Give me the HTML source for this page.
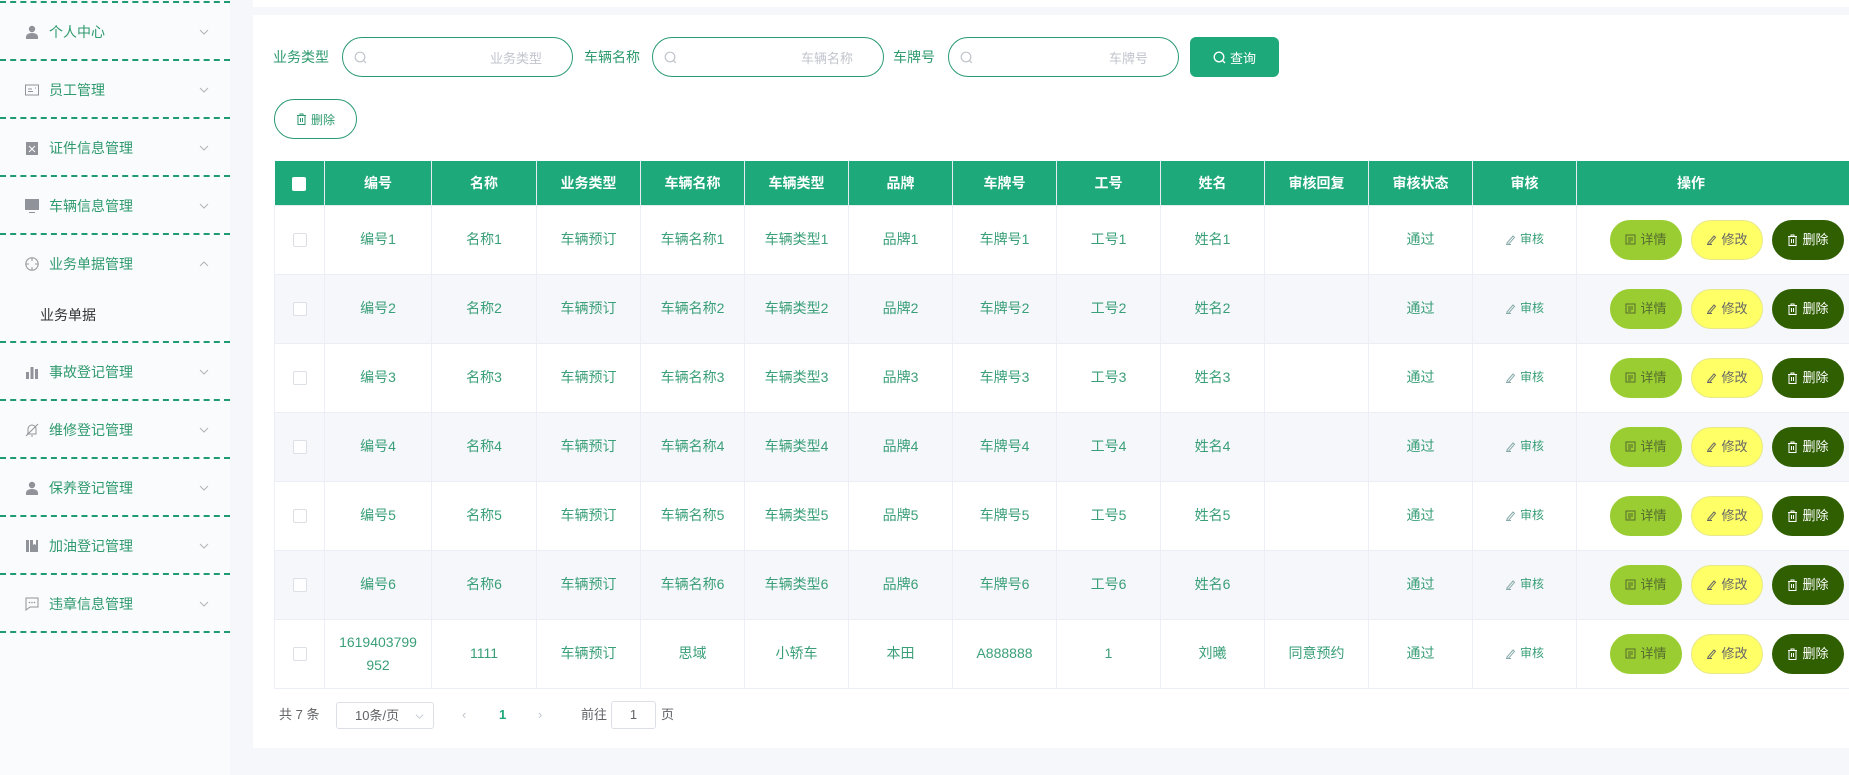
<!DOCTYPE html>
<html><head><meta charset="utf-8">
<style>
*{box-sizing:border-box;margin:0;padding:0}
body{width:1849px;height:775px;overflow:hidden;background:#f5f7fa;font-family:"Liberation Sans","Noto Sans CJK SC",sans-serif;font-size:14px;position:relative}
.side{position:absolute;left:0;top:0;width:230px;height:775px;background:#fafbfc}
.dash{position:absolute;left:0;width:230px;border-top:2px dashed #1f9a74}
.mi{position:absolute;left:0;width:230px;height:56px;display:flex;align-items:center;color:#2e9a6e;font-size:14px}
.mi svg.ic{position:absolute;left:25px;width:14px;height:14px}
.mi span{position:absolute;left:49px}
.mi .chev{position:absolute;left:199px;width:10px;height:10px}
.topcard{position:absolute;left:253px;top:0;width:1596px;height:7px;background:#fff}
.card{position:absolute;left:253px;top:15px;width:1596px;height:733px;background:#fff;overflow:hidden}
.lbl{position:absolute;top:47px;color:#2e9a6e;font-size:14px;line-height:20px}
.inp{position:absolute;top:37px;height:40px;border:1px solid #2a9a72;border-radius:20px;background:#fff}
.inp svg{position:absolute;left:11px;top:13px}
.inp .ph{position:absolute;right:30px;top:10px;color:#c0c4cc;font-size:13px}
.qbtn{position:absolute;left:1190px;top:37px;width:89px;height:40px;background:#1ea97a;border-radius:6px;color:#fff;font-size:13px;display:flex;align-items:center;justify-content:center;gap:4px}
.dbtn{position:absolute;left:274px;top:99px;width:83px;height:40px;border:1px solid #2a9a72;border-radius:20px;color:#2e9a6e;font-size:12px;display:flex;align-items:center;justify-content:center;gap:4px}
table{position:absolute;left:274px;top:161px;border-collapse:collapse;table-layout:fixed;width:1620px}
th{background:#1ea97a;color:#fff;font-weight:bold;height:44px;border:1px solid #e6ebf0;border-top:none;font-size:14px}
th:first-child{border-left:none}
td{height:69px;border:1px solid #ebeef5;text-align:center;color:#3a9f78;font-size:14px;line-height:23px;background:#fff}
tr.s td{background:#f5f7fa}
.cb{display:inline-block;width:14px;height:14px;border:1px solid #dcdfe6;background:#fff;border-radius:2px;vertical-align:middle}
.hcb{display:inline-block;width:14px;height:14px;background:#fff;border-radius:2px;vertical-align:middle}
.aud{font-size:12px;color:#3a9f78;display:inline-flex;align-items:center;gap:4px}
.ops{display:flex;gap:9px;padding-left:33px}
.b{width:72px;height:40px;border-radius:20px;font-size:13px;display:flex;align-items:center;justify-content:center;gap:4px}
.b1{background:#9acd32;color:#556b2f;border:1px solid #9acd32}
.b2{background:#ffff66;color:#666;border:1px solid #e8e88a}
.b3{background:#2f5f00;color:#fff}
.pg{position:absolute;top:705px;font-size:13px;color:#606266;line-height:20px}
</style></head><body>
<div class="side">
  <div class="dash" style="top:1px"></div>
  <div class="mi" style="top:4px"><svg class="ic" viewBox="0 0 14 14"><circle cx="7" cy="4" r="3.2" fill="#909399"/><path d="M1 14v-2c0-2.5 2.5-4 6-4s6 1.5 6 4v2z" fill="#909399"/></svg><span>个人中心</span><svg class="chev" viewBox="0 0 10 10"><path d="M1 3l4 4 4-4" stroke="#b0b3b8" fill="none"/></svg></div>
  <div class="dash" style="top:59px"></div>
  <div class="mi" style="top:62px"><svg class="ic" viewBox="0 0 14 14"><rect x="0.5" y="2" width="13" height="10" fill="none" stroke="#909399"/><path d="M3 6h4M3 8.5h5M10 5h1" stroke="#909399"/></svg><span>员工管理</span><svg class="chev" viewBox="0 0 10 10"><path d="M1 3l4 4 4-4" stroke="#b0b3b8" fill="none"/></svg></div>
  <div class="dash" style="top:117px"></div>
  <div class="mi" style="top:120px"><svg class="ic" viewBox="0 0 14 14"><rect x="1" y="1" width="12" height="13" fill="#909399"/><path d="M4 5l6 6M10 5l-6 6" stroke="#fff"/></svg><span>证件信息管理</span><svg class="chev" viewBox="0 0 10 10"><path d="M1 3l4 4 4-4" stroke="#b0b3b8" fill="none"/></svg></div>
  <div class="dash" style="top:175px"></div>
  <div class="mi" style="top:178px"><svg class="ic" viewBox="0 0 14 14"><rect x="0" y="0" width="14" height="11" fill="#909399"/><path d="M4 13.5h6" stroke="#909399"/></svg><span>车辆信息管理</span><svg class="chev" viewBox="0 0 10 10"><path d="M1 3l4 4 4-4" stroke="#b0b3b8" fill="none"/></svg></div>
  <div class="dash" style="top:233px"></div>
  <div class="mi" style="top:236px"><svg class="ic" viewBox="0 0 14 14"><circle cx="7" cy="7" r="6.2" fill="none" stroke="#909399"/><path d="M7 1v3M7 10v3M1 7h3M10 7h3" stroke="#909399"/></svg><span>业务单据管理</span><svg class="chev" viewBox="0 0 10 10"><path d="M1 7l4-4 4 4" stroke="#b0b3b8" fill="none"/></svg></div>
  <div style="position:absolute;left:40px;top:305px;color:#303133;font-size:14px">业务单据</div>
  <div class="dash" style="top:341px"></div>
  <div class="mi" style="top:344px"><svg class="ic" viewBox="0 0 14 14"><rect x="1" y="7" width="3" height="7" fill="#909399"/><rect x="5.5" y="2" width="3" height="12" fill="#909399"/><rect x="10" y="4" width="3" height="10" fill="#909399"/></svg><span>事故登记管理</span><svg class="chev" viewBox="0 0 10 10"><path d="M1 3l4 4 4-4" stroke="#b0b3b8" fill="none"/></svg></div>
  <div class="dash" style="top:399px"></div>
  <div class="mi" style="top:402px"><svg class="ic" viewBox="0 0 14 14"><path d="M3 11V6a4 4 0 0 1 8 0v5H2M1 13L13 1M6 13h2" stroke="#909399" fill="none"/></svg><span>维修登记管理</span><svg class="chev" viewBox="0 0 10 10"><path d="M1 3l4 4 4-4" stroke="#b0b3b8" fill="none"/></svg></div>
  <div class="dash" style="top:457px"></div>
  <div class="mi" style="top:460px"><svg class="ic" viewBox="0 0 14 14"><circle cx="7" cy="4" r="3.2" fill="#909399"/><path d="M1 14v-2c0-2.5 2.5-4 6-4s6 1.5 6 4v2z" fill="#909399"/></svg><span>保养登记管理</span><svg class="chev" viewBox="0 0 10 10"><path d="M1 3l4 4 4-4" stroke="#b0b3b8" fill="none"/></svg></div>
  <div class="dash" style="top:515px"></div>
  <div class="mi" style="top:518px"><svg class="ic" viewBox="0 0 14 14"><rect x="1" y="1" width="3" height="12" fill="#909399"/><rect x="5" y="1" width="8" height="12" fill="#909399"/><path d="M8 1v5l1.5-1 1.5 1V1" fill="#fff"/></svg><span>加油登记管理</span><svg class="chev" viewBox="0 0 10 10"><path d="M1 3l4 4 4-4" stroke="#b0b3b8" fill="none"/></svg></div>
  <div class="dash" style="top:573px"></div>
  <div class="mi" style="top:576px"><svg class="ic" viewBox="0 0 14 14"><path d="M1 1h12v9H5l-4 3z" fill="none" stroke="#909399"/><circle cx="4.5" cy="5.5" r=".8" fill="#909399"/><circle cx="7" cy="5.5" r=".8" fill="#909399"/><circle cx="9.5" cy="5.5" r=".8" fill="#909399"/></svg><span>违章信息管理</span><svg class="chev" viewBox="0 0 10 10"><path d="M1 3l4 4 4-4" stroke="#b0b3b8" fill="none"/></svg></div>
  <div class="dash" style="top:631px"></div>
</div>
<div class="topcard"></div>
<div class="card"></div>

<div class="lbl" style="left:273px">业务类型</div>
<div class="inp" style="left:342px;width:231px"><svg width="13" height="13" viewBox="0 0 13 13"><circle cx="6" cy="6" r="4.8" fill="none" stroke="#c0c4cc" stroke-width="1.2"/><path d="M9.5 9.5l2.5 2.5" stroke="#c0c4cc" stroke-width="1.2"/></svg><span class="ph">业务类型</span></div>
<div class="lbl" style="left:584px">车辆名称</div>
<div class="inp" style="left:652px;width:232px"><svg width="13" height="13" viewBox="0 0 13 13"><circle cx="6" cy="6" r="4.8" fill="none" stroke="#c0c4cc" stroke-width="1.2"/><path d="M9.5 9.5l2.5 2.5" stroke="#c0c4cc" stroke-width="1.2"/></svg><span class="ph">车辆名称</span></div>
<div class="lbl" style="left:893px">车牌号</div>
<div class="inp" style="left:948px;width:231px"><svg width="13" height="13" viewBox="0 0 13 13"><circle cx="6" cy="6" r="4.8" fill="none" stroke="#c0c4cc" stroke-width="1.2"/><path d="M9.5 9.5l2.5 2.5" stroke="#c0c4cc" stroke-width="1.2"/></svg><span class="ph">车牌号</span></div>
<div class="qbtn"><svg width="13" height="13" viewBox="0 0 13 13"><circle cx="6" cy="6" r="4.8" fill="none" stroke="#fff" stroke-width="1.3"/><path d="M9.5 9.5l2.5 2.5" stroke="#fff" stroke-width="1.3"/></svg>查询</div>
<div class="dbtn"><svg width="11" height="12" viewBox="0 0 11 12"><path d="M1 2.5h9M4 2.5V1h3v1.5M2 2.5v9h7v-9M4.5 5v4M6.5 5v4" stroke="#2e9a6e" fill="none"/></svg>删除</div>

<table>
<colgroup><col style="width:50px"><col style="width:107px"><col style="width:105px"><col style="width:104px"><col style="width:104px"><col style="width:104px"><col style="width:104px"><col style="width:104px"><col style="width:104px"><col style="width:104px"><col style="width:104px"><col style="width:104px"><col style="width:104px"><col style="width:320px"></colgroup>
<tr><th><span class="hcb"></span></th><th>编号</th><th>名称</th><th>业务类型</th><th>车辆名称</th><th>车辆类型</th><th>品牌</th><th>车牌号</th><th>工号</th><th>姓名</th><th>审核回复</th><th>审核状态</th><th>审核</th><th style="text-align:left;padding-left:100px">操作</th></tr>
<tr><td><span class="cb"></span></td><td>编号1</td><td>名称1</td><td>车辆预订</td><td>车辆名称1</td><td>车辆类型1</td><td>品牌1</td><td>车牌号1</td><td>工号1</td><td>姓名1</td><td></td><td>通过</td><td><span class="aud"><svg width="11" height="11" viewBox="0 0 11 11"><path d="M2 9L8 2l1.5 1.3-6 7H2zM1 10.5h5" stroke="#8aa" fill="none"/></svg>审核</span></td><td><div class="ops"><div class="b b1"><svg width="11" height="11" viewBox="0 0 11 11"><rect x="1" y="1" width="9" height="9" fill="none" stroke="#556b2f"/><path d="M3 4h5M3 6h5M3 8h3" stroke="#556b2f"/></svg>详情</div><div class="b b2"><svg width="11" height="11" viewBox="0 0 11 11"><path d="M2 9L8 2l1.5 1.3-6 7H2zM1 10.5h5" stroke="#666" fill="none"/></svg>修改</div><div class="b b3"><svg width="11" height="12" viewBox="0 0 11 12"><path d="M1 2.5h9M4 2.5V1h3v1.5M2 2.5v9h7v-9M4.5 5v4M6.5 5v4" stroke="#fff" fill="none"/></svg>删除</div></div></td></tr>
<tr class="s"><td><span class="cb"></span></td><td>编号2</td><td>名称2</td><td>车辆预订</td><td>车辆名称2</td><td>车辆类型2</td><td>品牌2</td><td>车牌号2</td><td>工号2</td><td>姓名2</td><td></td><td>通过</td><td><span class="aud"><svg width="11" height="11" viewBox="0 0 11 11"><path d="M2 9L8 2l1.5 1.3-6 7H2zM1 10.5h5" stroke="#8aa" fill="none"/></svg>审核</span></td><td><div class="ops"><div class="b b1"><svg width="11" height="11" viewBox="0 0 11 11"><rect x="1" y="1" width="9" height="9" fill="none" stroke="#556b2f"/><path d="M3 4h5M3 6h5M3 8h3" stroke="#556b2f"/></svg>详情</div><div class="b b2"><svg width="11" height="11" viewBox="0 0 11 11"><path d="M2 9L8 2l1.5 1.3-6 7H2zM1 10.5h5" stroke="#666" fill="none"/></svg>修改</div><div class="b b3"><svg width="11" height="12" viewBox="0 0 11 12"><path d="M1 2.5h9M4 2.5V1h3v1.5M2 2.5v9h7v-9M4.5 5v4M6.5 5v4" stroke="#fff" fill="none"/></svg>删除</div></div></td></tr>
<tr><td><span class="cb"></span></td><td>编号3</td><td>名称3</td><td>车辆预订</td><td>车辆名称3</td><td>车辆类型3</td><td>品牌3</td><td>车牌号3</td><td>工号3</td><td>姓名3</td><td></td><td>通过</td><td><span class="aud"><svg width="11" height="11" viewBox="0 0 11 11"><path d="M2 9L8 2l1.5 1.3-6 7H2zM1 10.5h5" stroke="#8aa" fill="none"/></svg>审核</span></td><td><div class="ops"><div class="b b1"><svg width="11" height="11" viewBox="0 0 11 11"><rect x="1" y="1" width="9" height="9" fill="none" stroke="#556b2f"/><path d="M3 4h5M3 6h5M3 8h3" stroke="#556b2f"/></svg>详情</div><div class="b b2"><svg width="11" height="11" viewBox="0 0 11 11"><path d="M2 9L8 2l1.5 1.3-6 7H2zM1 10.5h5" stroke="#666" fill="none"/></svg>修改</div><div class="b b3"><svg width="11" height="12" viewBox="0 0 11 12"><path d="M1 2.5h9M4 2.5V1h3v1.5M2 2.5v9h7v-9M4.5 5v4M6.5 5v4" stroke="#fff" fill="none"/></svg>删除</div></div></td></tr>
<tr class="s"><td><span class="cb"></span></td><td>编号4</td><td>名称4</td><td>车辆预订</td><td>车辆名称4</td><td>车辆类型4</td><td>品牌4</td><td>车牌号4</td><td>工号4</td><td>姓名4</td><td></td><td>通过</td><td><span class="aud"><svg width="11" height="11" viewBox="0 0 11 11"><path d="M2 9L8 2l1.5 1.3-6 7H2zM1 10.5h5" stroke="#8aa" fill="none"/></svg>审核</span></td><td><div class="ops"><div class="b b1"><svg width="11" height="11" viewBox="0 0 11 11"><rect x="1" y="1" width="9" height="9" fill="none" stroke="#556b2f"/><path d="M3 4h5M3 6h5M3 8h3" stroke="#556b2f"/></svg>详情</div><div class="b b2"><svg width="11" height="11" viewBox="0 0 11 11"><path d="M2 9L8 2l1.5 1.3-6 7H2zM1 10.5h5" stroke="#666" fill="none"/></svg>修改</div><div class="b b3"><svg width="11" height="12" viewBox="0 0 11 12"><path d="M1 2.5h9M4 2.5V1h3v1.5M2 2.5v9h7v-9M4.5 5v4M6.5 5v4" stroke="#fff" fill="none"/></svg>删除</div></div></td></tr>
<tr><td><span class="cb"></span></td><td>编号5</td><td>名称5</td><td>车辆预订</td><td>车辆名称5</td><td>车辆类型5</td><td>品牌5</td><td>车牌号5</td><td>工号5</td><td>姓名5</td><td></td><td>通过</td><td><span class="aud"><svg width="11" height="11" viewBox="0 0 11 11"><path d="M2 9L8 2l1.5 1.3-6 7H2zM1 10.5h5" stroke="#8aa" fill="none"/></svg>审核</span></td><td><div class="ops"><div class="b b1"><svg width="11" height="11" viewBox="0 0 11 11"><rect x="1" y="1" width="9" height="9" fill="none" stroke="#556b2f"/><path d="M3 4h5M3 6h5M3 8h3" stroke="#556b2f"/></svg>详情</div><div class="b b2"><svg width="11" height="11" viewBox="0 0 11 11"><path d="M2 9L8 2l1.5 1.3-6 7H2zM1 10.5h5" stroke="#666" fill="none"/></svg>修改</div><div class="b b3"><svg width="11" height="12" viewBox="0 0 11 12"><path d="M1 2.5h9M4 2.5V1h3v1.5M2 2.5v9h7v-9M4.5 5v4M6.5 5v4" stroke="#fff" fill="none"/></svg>删除</div></div></td></tr>
<tr class="s"><td><span class="cb"></span></td><td>编号6</td><td>名称6</td><td>车辆预订</td><td>车辆名称6</td><td>车辆类型6</td><td>品牌6</td><td>车牌号6</td><td>工号6</td><td>姓名6</td><td></td><td>通过</td><td><span class="aud"><svg width="11" height="11" viewBox="0 0 11 11"><path d="M2 9L8 2l1.5 1.3-6 7H2zM1 10.5h5" stroke="#8aa" fill="none"/></svg>审核</span></td><td><div class="ops"><div class="b b1"><svg width="11" height="11" viewBox="0 0 11 11"><rect x="1" y="1" width="9" height="9" fill="none" stroke="#556b2f"/><path d="M3 4h5M3 6h5M3 8h3" stroke="#556b2f"/></svg>详情</div><div class="b b2"><svg width="11" height="11" viewBox="0 0 11 11"><path d="M2 9L8 2l1.5 1.3-6 7H2zM1 10.5h5" stroke="#666" fill="none"/></svg>修改</div><div class="b b3"><svg width="11" height="12" viewBox="0 0 11 12"><path d="M1 2.5h9M4 2.5V1h3v1.5M2 2.5v9h7v-9M4.5 5v4M6.5 5v4" stroke="#fff" fill="none"/></svg>删除</div></div></td></tr>
<tr><td><span class="cb"></span></td><td>1619403799<br>952</td><td>1111</td><td>车辆预订</td><td>思域</td><td>小轿车</td><td>本田</td><td>A888888</td><td>1</td><td>刘曦</td><td>同意预约</td><td>通过</td><td><span class="aud"><svg width="11" height="11" viewBox="0 0 11 11"><path d="M2 9L8 2l1.5 1.3-6 7H2zM1 10.5h5" stroke="#8aa" fill="none"/></svg>审核</span></td><td><div class="ops"><div class="b b1"><svg width="11" height="11" viewBox="0 0 11 11"><rect x="1" y="1" width="9" height="9" fill="none" stroke="#556b2f"/><path d="M3 4h5M3 6h5M3 8h3" stroke="#556b2f"/></svg>详情</div><div class="b b2"><svg width="11" height="11" viewBox="0 0 11 11"><path d="M2 9L8 2l1.5 1.3-6 7H2zM1 10.5h5" stroke="#666" fill="none"/></svg>修改</div><div class="b b3"><svg width="11" height="12" viewBox="0 0 11 12"><path d="M1 2.5h9M4 2.5V1h3v1.5M2 2.5v9h7v-9M4.5 5v4M6.5 5v4" stroke="#fff" fill="none"/></svg>删除</div></div></td></tr>
</table>

<div class="pg" style="left:279px">共 7 条</div>
<div style="position:absolute;left:336px;top:702px;width:98px;height:27px;border:1px solid #dcdfe6;border-radius:3px;font-size:13px;color:#606266;line-height:25px;padding-left:18px">10条/页<svg style="position:absolute;right:9px;top:9px" width="9" height="9" viewBox="0 0 10 10"><path d="M1 3l4 4 4-4" stroke="#c0c4cc" fill="none"/></svg></div>
<div class="pg" style="left:462px;color:#c0c4cc">‹</div>
<div class="pg" style="left:499px;color:#1ea97a;font-weight:bold">1</div>
<div class="pg" style="left:538px;color:#c0c4cc">›</div>
<div class="pg" style="left:581px">前往</div>
<div style="position:absolute;left:611px;top:701px;width:45px;height:28px;border:1px solid #dcdfe6;border-radius:3px;text-align:center;font-size:13px;color:#606266;line-height:26px">1</div>
<div class="pg" style="left:661px">页</div>
</body></html>
